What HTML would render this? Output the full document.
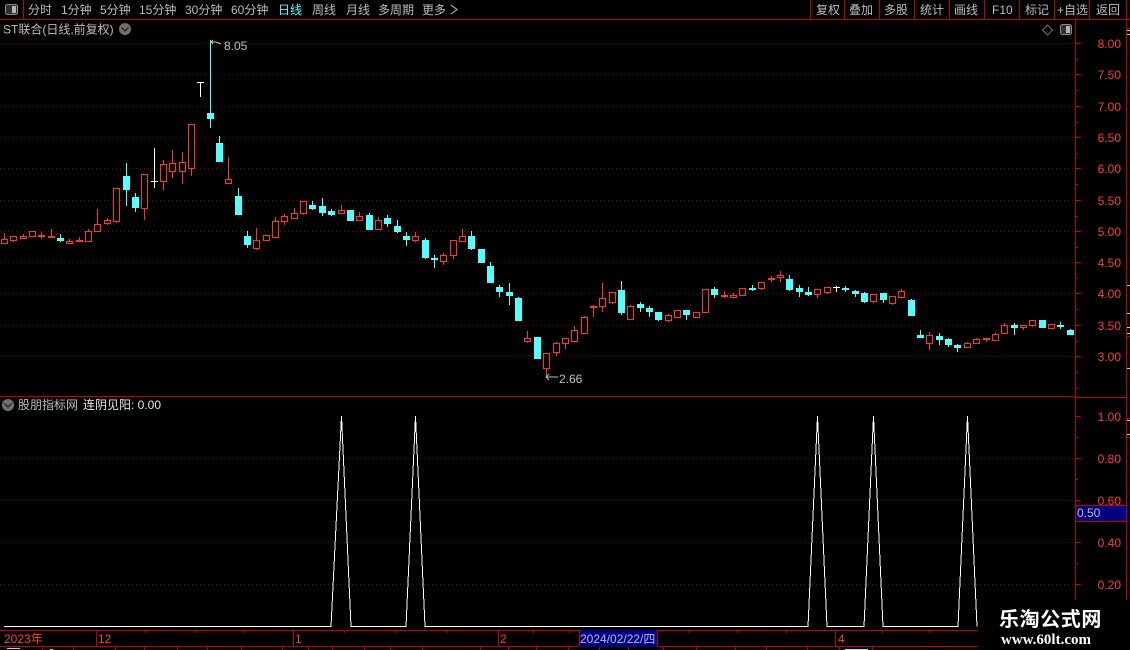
<!DOCTYPE html>
<html><head><meta charset="utf-8"><style>
html,body{margin:0;padding:0;background:#000;width:1130px;height:650px;overflow:hidden}
svg{display:block}
text{font-family:"Liberation Sans","WenQuanYi Zen Hei","Noto Sans CJK SC",sans-serif;font-size:12px}
.m{fill:#bcbcbc}
.a{fill:#ff3c3c}
</style></head><body>
<svg width="1130" height="650" viewBox="0 0 1130 650" xmlns="http://www.w3.org/2000/svg">
<rect width="1130" height="650" fill="#000"/>
<!-- grid -->
<path shape-rendering="crispEdges" stroke="#780000" stroke-dasharray="1 3" fill="none" d="M0 43.5H1075M0 74.5H1075M0 106.5H1075M0 137.5H1075M0 168.5H1075M0 200.5H1075M0 231.5H1075M0 262.5H1075M0 293.5H1075M0 325.5H1075M0 356.5H1075M0 458.5H1075M0 500.5H1075M0 542.5H1075M0 584.5H1075"/>
<!-- frame -->
<g shape-rendering="crispEdges" fill="none" stroke="#c00000">
<path d="M0 19.5H1130M0 396.5H1075M1076 397.5H1126M23.5 0V19M810.5 0V19M844.5 0V19M879.5 0V19M914.5 0V19M949.5 0V19M984.5 0V19M1019.5 0V19M1054.5 0V19M1089.5 0V19M1126.5 0V19"/>
<path d="M1075.5 20V600M1126.5 20V600"/>
<path d="M1075 43.5H1081M1075 74.5H1081M1075 106.5H1081M1075 137.5H1081M1075 168.5H1081M1075 200.5H1081M1075 231.5H1081M1075 262.5H1081M1075 293.5H1081M1075 325.5H1081M1075 356.5H1081M1075 59.5H1078M1075 90.5H1078M1075 122.5H1078M1075 153.5H1078M1075 184.5H1078M1075 216.5H1078M1075 247.5H1078M1075 278.5H1078M1075 309.5H1078M1075 341.5H1078M1075 372.5H1078M1075 388.5H1078"/>
<path d="M1075 416.5H1081M1075 458.5H1081M1075 500.5H1081M1075 542.5H1081M1075 584.5H1081M1075 437.5H1078M1075 479.5H1078M1075 521.5H1078M1075 563.5H1078"/>
<path d="M1127 418.5H1130M1127 437.5H1130M1127 336.5H1130M1127 28.5H1130"/>
<path d="M0 630.5H978M0 646.5H978M96.5 630V646M293.5 630V646M498.5 630V646M835.5 630V646"/>
<path d="M145.5 630V633M195.5 630V633M244.5 630V633M344.5 630V633M396.5 630V633M447.5 630V633M533.5 630V633M569.5 630V633M688.5 630V633M737.5 630V633M786.5 630V633M882.5 630V633M929.5 630V633"/>
<path d="M42.5 646V650M73.5 646V650M115.5 646V650M144.5 646V650M177.5 646V650M207.5 646V650M241.5 646V650M282.5 646V650M308.5 646V650M332.5 646V650M364.5 646V650M390.5 646V650M422.5 646V650M480.5 646V650M508.5 646V650M536.5 646V650M568.5 646V650M599.5 646V650M628.5 646V650M663.5 646V650M696.5 646V650M735.5 646V650M766.5 646V650M807.5 646V650M839.5 646V650M872.5 646V650"/>
</g>
<path shape-rendering="crispEdges" stroke="#c8c8c8" fill="none" d="M1127 30.5H1130M1127 34.5H1130M1127 285.5H1130M1127 313.5H1130M1127 327.5H1130M1127 333.5H1130M1127 368.5H1130M1127 420.5H1130M1127 434.5H1130M7 648.5H20M50 649.5H53"/>
<path shape-rendering="crispEdges" stroke="#54ffff" fill="none" d="M845 649.5H868"/>
<!-- toolbar icon -->
<rect x="5.5" y="4.5" width="12" height="10" rx="2" fill="#303030" stroke="#8c8c8c"/>
<rect x="12" y="6" width="4" height="7" fill="#b4b4b4"/>
<!-- toolbar text -->
<g class="m">
<text x="28" y="14" class="m">分时</text>
<text x="61" y="14" class="m">1分钟</text>
<text x="100" y="14" class="m">5分钟</text>
<text x="139" y="14" class="m">15分钟</text>
<text x="185" y="14" class="m">30分钟</text>
<text x="231" y="14" class="m">60分钟</text>
<text x="278" y="14" style="fill:#54ffff">日线</text>
<text x="312" y="14" class="m">周线</text>
<text x="346" y="14" class="m">月线</text>
<text x="378" y="14" class="m">多周期</text>
<text x="422" y="14" class="m">更多</text>
<path d="M451 5L457 9.5L451 14" fill="none" stroke="#c4c4c4"/>
<text x="816" y="14" class="m">复权</text>
<text x="849" y="14" class="m">叠加</text>
<text x="884" y="14" class="m">多股</text>
<text x="920" y="14" class="m">统计</text>
<text x="954" y="14" class="m">画线</text>
<text x="992" y="14" class="m">F10</text>
<text x="1025" y="14" class="m">标记</text>
<text x="1057" y="14" class="m">+自选</text>
<text x="1096" y="14" class="m">返回</text>
</g>
<!-- title -->
<text x="3" y="33.5" class="m">ST联合(日线,前复权)</text>
<circle cx="125" cy="29" r="6" fill="#707070"/>
<path d="M121.5 27.5L125 31L128.5 27.5" fill="none" stroke="#202020" stroke-width="1.3"/>
<path d="M1047.5 25L1052.5 30L1047.5 35L1042.5 30Z" fill="none" stroke="#707070"/>
<rect x="1060.5" y="24.5" width="11" height="10" rx="2" fill="#303030" stroke="#8c8c8c"/>
<rect x="1066" y="26" width="4" height="7" fill="#b4b4b4"/>
<!-- candles red -->
<path shape-rendering="crispEdges" fill="none" stroke="#ff3232" d="
M1.5 239.5h6v4h-6zM4.5 233V239.5
M10.5 236.5h6v4h-6zM13.5 240.5V242
M20.5 236.5h6v2h-6zM23.5 234V236.5
M29.5 231.5h6v5h-6z
M38 235.5H45M38 236.5H45M41.5 232V239
M48 236.5H55M48 237.5H55M51.5 229V237
M66.5 241.5h6v2h-6zM69.5 239V241.5
M76 240.5H83M76 241.5H83M79.5 237V240
M85.5 231.5h6v10h-6zM88.5 229V231.5
M94.5 224.5h6v7h-6zM97.5 209V224.5
M104.5 220.5h6v3h-6zM107.5 218V220.5M107.5 223.5V225
M113.5 188.5h6v33h-6zM116.5 221.5V223
M141.5 174.5h6v34h-6zM144.5 208.5V220
M160.5 164.5h6v17h-6zM163.5 160V164.5M163.5 181.5V190
M169.5 163.5h6v8h-6zM172.5 150V163.5M172.5 171.5V178
M179.5 162.5h6v9h-6zM182.5 152V162.5M182.5 171.5V184
M188.5 124.5h6v44h-6zM191.5 168.5V176
M225.5 179.5h6v4h-6zM228.5 157V179.5
M253.5 240.5h6v8h-6zM256.5 228V240.5M256.5 248.5V250
M263.5 235.5h6v5h-6z
M272.5 221.5h6v16h-6zM275.5 217V221.5
M281.5 216.5h6v5h-6zM284.5 214V216.5M284.5 221.5V225
M291.5 213.5h6v5h-6zM294.5 208V213.5
M300.5 201.5h6v12h-6zM303.5 213.5V215
M338.5 210.5h6v3h-6zM341.5 205V210.5
M356.5 216.5h6v4h-6zM359.5 212V216.5
M375.5 220.5h6v9h-6zM378.5 217V220.5
M412.5 236.5h6v4h-6zM415.5 232V236.5M415.5 240.5V242
M440.5 255.5h6v6h-6zM443.5 253V255.5M443.5 261.5V265
M450.5 240.5h6v15h-6zM453.5 255.5V259
M459.5 236.5h6v5h-6zM462.5 229V236.5
M524.5 338.5h6v3h-6zM527.5 331V338.5M527.5 341.5V343
M543.5 353.5h6v15h-6zM546.5 368.5V378
M553.5 343.5h6v9h-6zM556.5 342V343.5M556.5 352.5V356
M562.5 338.5h6v5h-6zM565.5 343.5V349
M571.5 330.5h6v11h-6zM574.5 326V330.5
M581.5 317.5h6v16h-6zM584.5 316V317.5
M590 306.5H597M590 307.5H597M593.5 305V317
M599.5 298.5h6v8h-6zM602.5 283V298.5M602.5 306.5V312
M609.5 292.5h6v10h-6zM612.5 302.5V304
M627.5 306.5h6v13h-6zM630.5 305V306.5
M665.5 315.5h6v5h-6zM668.5 314V315.5M668.5 320.5V322
M674.5 310.5h6v7h-6z
M693.5 312.5h6v5h-6z
M702.5 289.5h6v23h-6z
M721 295.5H728M721 296.5H728M724.5 291V298
M730.5 295.5h6v2h-6zM733.5 293V295.5
M739.5 288.5h6v7h-6z
M758.5 282.5h6v6h-6zM761.5 288.5V290
M768 278.5H775M768 279.5H775M771.5 276V282
M777.5 275.5h6v2h-6zM780.5 271V275.5M780.5 277.5V282
M814.5 289.5h6v5h-6zM817.5 294.5V298
M824.5 287.5h6v5h-6zM827.5 292.5V294
M870.5 294.5h6v7h-6zM873.5 301.5V303
M889.5 296.5h6v7h-6zM892.5 303.5V305
M898.5 291.5h6v6h-6zM901.5 289V291.5
M926.5 335.5h6v8h-6zM929.5 332V335.5M929.5 343.5V350
M964.5 343.5h6v4h-6zM967.5 342V343.5
M973.5 339.5h6v4h-6zM976.5 338V339.5
M983 338.5H990M983 339.5H990M986.5 340V342
M992.5 334.5h6v6h-6zM995.5 333V334.5
M1001.5 325.5h6v8h-6zM1004.5 323V325.5
M1020.5 325.5h6v2h-6zM1023.5 327.5V330
M1029.5 320.5h6v5h-6zM1032.5 325.5V327
M1048.5 324.5h6v4h-6z"/>
<!-- candles cyan wicks -->
<path shape-rendering="crispEdges" fill="none" stroke="#54ffff" d="
M60.5 234V242M126.5 163V206M135.5 193V212M210.5 40V128M219.5 136V143M238.5 188V196M247.5 231V248
M312.5 201V210M322.5 198V216M331.5 209V216M369.5 213V215M387.5 215V227M397.5 220V233M406.5 232V246
M425.5 238V259M434.5 255V268M471.5 231V250M490.5 262V266M499.5 285V297M509.5 283V305M518.5 297V298
M621.5 281V315M640.5 302V312M649.5 306V317M658.5 320V321M686.5 315V320M714.5 287V298M752.5 285V291
M789.5 275V291M799.5 285V297M808.5 287V296M845.5 286V292M855.5 290V297M864.5 292V303M883.5 300V303
M911.5 299V300M920.5 330V335M939.5 333V345M948.5 338V347M957.5 344V352M1014.5 323V335M1060.5 322V329M1070.5 329V330"/>
<!-- candles cyan bodies -->
<path shape-rendering="crispEdges" fill="#54ffff" d="
M57 238h7V241h-7zM123 176h7V190h-7zM132 197h7V208h-7zM207 113h7V119h-7zM216 143h7V162h-7zM235 196h7V215h-7zM244 236h7V245h-7z
M309 205h7V209h-7zM319 206h7V213h-7zM328 211h7V215h-7zM347 210h7V221h-7zM366 215h7V230h-7zM384 218h7V224h-7zM394 226h7V232h-7zM403 236h7V240h-7z
M422 240h7V258h-7zM431 258h7V260h-7zM468 236h7V249h-7zM478 249h7V263h-7zM487 266h7V283h-7zM496 287h7V292h-7zM506 292h7V296h-7zM515 298h7V321h-7zM534 337h7V359h-7z
M618 290h7V313h-7zM637 304h7V308h-7zM646 308h7V312h-7zM655 312h7V320h-7zM683 310h7V315h-7zM711 289h7V295h-7zM749 288h7V290h-7z
M786 279h7V290h-7zM796 288h7V292h-7zM805 292h7V295h-7zM842 288h7V290h-7zM852 291h7V294h-7zM861 293h7V302h-7zM880 293h7V300h-7z
M908 300h7V316h-7zM917 335h7V338h-7zM936 336h7V340h-7zM945 339h7V345h-7zM954 345h7V348h-7zM1011 325h7V328h-7zM1039 320h7V328h-7zM1057 325h7V327h-7zM1067 330h7V335h-7z"/>
<!-- doji white -->
<path shape-rendering="crispEdges" fill="none" stroke="#fff" d="M154.5 148V188M151 181.5H158M200.5 82V97M197 82.5H204M836.5 286V292M833 287.5H840"/>
<!-- hi lo labels -->
<path d="M213 40L211 42L213 44M211 42H216L221 44" fill="none" stroke="#c0c0c0"/>
<text x="224" y="50" fill="#c0c0c0">8.05</text>
<path d="M549 374L546 377L549 380M546 377H558" fill="none" stroke="#c0c0c0"/>
<text x="559" y="383" fill="#c0c0c0">2.66</text>
<!-- axis labels -->
<g class="a" text-anchor="end">
<text x="1121" y="48" class="a">8.00</text>
<text x="1121" y="79" class="a">7.50</text>
<text x="1121" y="111" class="a">7.00</text>
<text x="1121" y="142" class="a">6.50</text>
<text x="1121" y="173" class="a">6.00</text>
<text x="1121" y="205" class="a">5.50</text>
<text x="1121" y="236" class="a">5.00</text>
<text x="1121" y="267" class="a">4.50</text>
<text x="1121" y="298" class="a">4.00</text>
<text x="1121" y="330" class="a">3.50</text>
<text x="1121" y="361" class="a">3.00</text>
<text x="1121" y="421" class="a">1.00</text>
<text x="1121" y="463" class="a">0.80</text>
<text x="1121" y="505" class="a">0.60</text>
<text x="1121" y="547" class="a">0.40</text>
<text x="1121" y="589" class="a">0.20</text>
</g>
<rect x="1076" y="505" width="50" height="16" fill="#000080"/>
<path shape-rendering="crispEdges" stroke="#c00000" d="M1076 505.5H1126M1076 521.5H1126"/>
<text x="1077" y="517" fill="#c0c0c0">0.50</text>
<!-- indicator title -->
<circle cx="8" cy="405" r="6" fill="#707070"/>
<path d="M4.5 403.5L8 407L11.5 403.5" fill="none" stroke="#202020" stroke-width="1.3"/>
<text x="18" y="409" class="m">股朋指标网</text>
<text x="83" y="409" fill="#e8e8e8">连阴见阳: 0.00</text>
<!-- indicator line -->
<polyline shape-rendering="crispEdges" fill="none" stroke="#fff" points="4,626.5 331,626.5 341.5,416 351,626.5 406,626.5 415.5,416 425,626.5 808,626.5 817.5,416 827,626.5 864,626.5 873.5,416 883,626.5 958,626.5 967.5,416 977,626.5"/>
<!-- date axis -->
<rect x="579" y="630" width="79" height="17" fill="#000080"/>
<path shape-rendering="crispEdges" fill="none" stroke="#c00000" d="M579.5 630V646M657.5 630V646"/>
<text x="580" y="643" fill="#b8b8e8">2024/02/22/四</text>
<text x="4" y="643" class="a">2023年</text>
<text x="98" y="643" class="a">12</text>
<text x="295" y="643" class="a">1</text>
<text x="500" y="643" class="a">2</text>
<text x="838" y="643" class="a">4</text>
<!-- watermark -->
<rect x="978" y="600" width="152" height="50" fill="#000"/>
<text x="999" y="626" fill="#fff" style="font-size:20px;font-weight:700;letter-spacing:.6px;font-family:'Noto Sans CJK SC',sans-serif">乐淘公式网</text>
<text x="1001" y="644" fill="#fff" style="font-size:15px;font-weight:700;font-family:'Liberation Serif',serif">www.60lt.com</text>
</svg>
</body></html>
